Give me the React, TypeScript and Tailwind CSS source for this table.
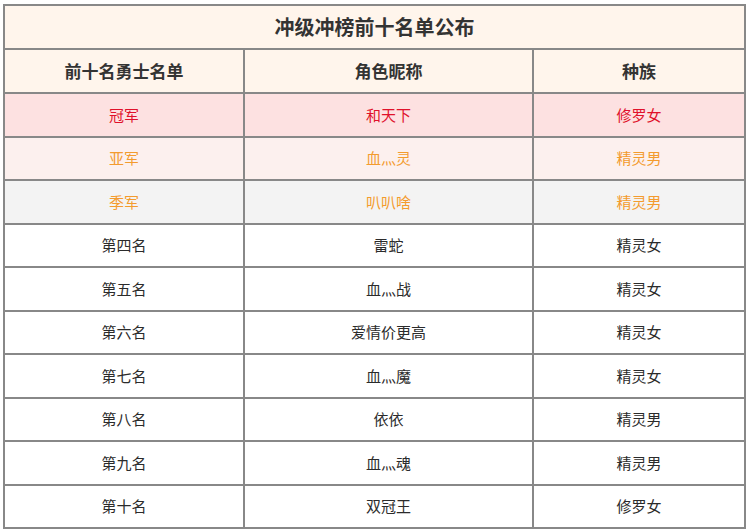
import React from "react";

type Row = { rank: string; name: string; race: string; tone?: "gold" | "silver" | "bronze" };

const rows: Row[] = [
  { rank: "冠军", name: "和天下", race: "修罗女", tone: "gold" },
  { rank: "亚军", name: "血灬灵", race: "精灵男", tone: "silver" },
  { rank: "季军", name: "叭叭啥", race: "精灵男", tone: "bronze" },
  { rank: "第四名", name: "雷蛇", race: "精灵女" },
  { rank: "第五名", name: "血灬战", race: "精灵女" },
  { rank: "第六名", name: "爱情价更高", race: "精灵女" },
  { rank: "第七名", name: "血灬魔", race: "精灵女" },
  { rank: "第八名", name: "依依", race: "精灵男" },
  { rank: "第九名", name: "血灬魂", race: "精灵男" },
  { rank: "第十名", name: "双冠王", race: "修罗女" },
];

const rowClass = (tone?: Row["tone"]) => {
  if (tone === "gold") return "bg-[#fde1e1] text-[#e0112b]";
  if (tone === "silver") return "bg-[#fcf0ee] text-[#f39b2e]";
  if (tone === "bronze") return "bg-[#f3f3f3] text-[#f39b2e]";
  return "bg-white text-[#2b2b2b]";
};

export default function App() {
  return (
    <div className="pl-[3px] pt-[4px] bg-white font-['Noto_Sans_CJK_SC','Noto_Sans',sans-serif]">
      <table className="w-[743px] border-collapse border-2 border-[#888888] text-center">
        <thead>
          <tr className="bg-[#fff5ec]">
            <th colSpan={3} className="h-[44px] border-2 border-[#888888] text-[20px] font-bold text-[#333333]">
              冲级冲榜前十名单公布
            </th>
          </tr>
          <tr className="bg-[#fff5ec] text-[17px] font-bold text-[#333333]">
            <th className="w-[240px] h-[44px] border-2 border-[#888888]">前十名勇士名单</th>
            <th className="w-[289px] border-2 border-[#888888]">角色昵称</th>
            <th className="border-2 border-[#888888]">种族</th>
          </tr>
        </thead>
        <tbody>
          {rows.map((r) => (
            <tr key={r.rank} className={`text-[15px] ${rowClass(r.tone)}`}>
              <td className="h-[43.5px] border-2 border-[#888888]">{r.rank}</td>
              <td className="border-2 border-[#888888]">{r.name}</td>
              <td className="border-2 border-[#888888]">{r.race}</td>
            </tr>
          ))}
        </tbody>
      </table>
    </div>
  );
}
